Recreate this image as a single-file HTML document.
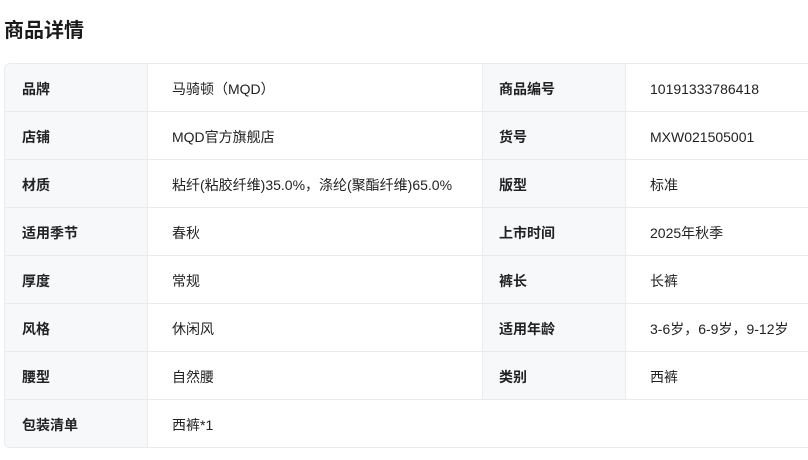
<!DOCTYPE html>
<html><head><meta charset="utf-8"><style>
body{margin:0;background:#fff;font-family:"Liberation Sans","Noto Sans CJK SC",sans-serif;color:#222;width:808px;height:460px;overflow:hidden;position:relative}
h1{position:absolute;left:4px;top:16px;margin:0;font-size:20px;font-weight:bold;line-height:30px;color:#1a1a1a}
.t{position:absolute;left:4px;top:63px;width:830px;border:1px solid #ebebeb;border-radius:6px;overflow:hidden}
.r{display:flex;height:47px;border-bottom:1px solid #ebebeb}
.r:last-child{border-bottom:none}
.c{line-height:47px;font-size:14px;box-sizing:border-box;padding-top:2px}
.l{background:#f7f8fa;font-weight:bold;padding-left:17px;width:142px}
.l2{padding-left:16px}
.v{padding-left:24px;width:336px;border-left:1px solid #ebebeb;border-right:1px solid #ebebeb}
.v2{flex:1;border-right:none}
</style></head><body>
<h1>商品详情</h1>
<div class="t">
<div class="r"><div class="c l">品牌</div><div class="c v">马骑顿（MQD）</div><div class="c l l2">商品编号</div><div class="c v v2">10191333786418</div></div>
<div class="r"><div class="c l">店铺</div><div class="c v">MQD官方旗舰店</div><div class="c l l2">货号</div><div class="c v v2">MXW021505001</div></div>
<div class="r"><div class="c l">材质</div><div class="c v">粘纤(粘胶纤维)35.0%，涤纶(聚酯纤维)65.0%</div><div class="c l l2">版型</div><div class="c v v2">标准</div></div>
<div class="r"><div class="c l">适用季节</div><div class="c v">春秋</div><div class="c l l2">上市时间</div><div class="c v v2">2025年秋季</div></div>
<div class="r"><div class="c l">厚度</div><div class="c v">常规</div><div class="c l l2">裤长</div><div class="c v v2">长裤</div></div>
<div class="r"><div class="c l">风格</div><div class="c v">休闲风</div><div class="c l l2">适用年龄</div><div class="c v v2">3-6岁，6-9岁，9-12岁</div></div>
<div class="r"><div class="c l">腰型</div><div class="c v">自然腰</div><div class="c l l2">类别</div><div class="c v v2">西裤</div></div>
<div class="r"><div class="c l">包装清单</div><div class="c v" style="border-right:none">西裤*1</div></div>
</div>
</body></html>
